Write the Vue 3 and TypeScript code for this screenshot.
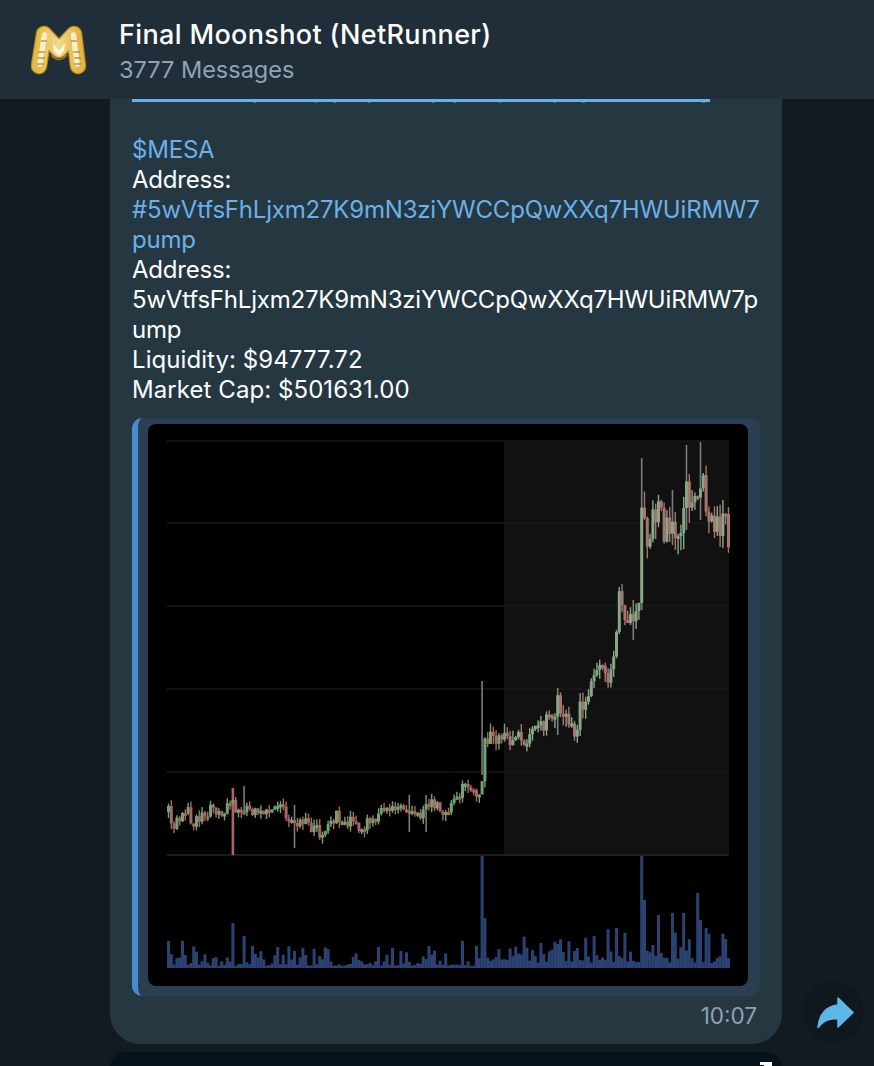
<script setup lang="ts">
interface Candle {
  x: number
  top: number
  bottom: number
  bodyTop: number
  bodyH: number
  color: string
  wickColor: string
  wickWidth: number
}

// traced from the screenshot, page coordinates
const trace: [number, number][] = [
  [167, 812], [172, 825], [180, 820], [185, 808], [190, 822], [197, 820], [205, 812], [212, 808],
  [220, 815], [228, 797], [232, 802], [238, 818], [245, 802], [250, 812], [260, 815], [275, 810],
  [280, 808], [285, 815], [293, 825], [300, 822], [315, 830], [322, 838], [328, 825], [335, 815],
  [345, 820], [355, 825], [365, 825], [375, 815], [385, 805], [395, 810], [405, 810], [410, 815],
  [420, 812], [430, 805], [440, 810], [450, 808], [460, 790], [465, 785], [472, 795], [480, 795],
  [483, 735], [490, 735], [500, 742], [510, 740], [520, 735], [530, 738], [540, 725], [550, 715],
  [556, 702], [560, 720], [565, 715], [572, 725], [575, 735], [580, 702], [585, 695], [590, 680],
  [595, 675], [600, 668], [608, 680], [610, 660], [614, 640], [617, 592], [622, 610], [626, 628],
  [632, 612], [638, 600], [640, 512], [645, 540], [650, 530], [655, 515], [660, 520], [665, 530],
  [670, 525], [675, 535], [680, 520], [685, 495], [690, 510], [695, 500], [698, 470], [702, 490],
  [708, 510], [714, 530], [720, 520], [725, 510], [729, 555],
]

const wickOverrides: Record<number, [number, number]> = {
  232: [788, 855],
  243: [786, 815],
  408: [795, 832],
  424: [795, 832],
  293: [805, 848],
  482: [681, 775],
  556: [688, 735],
  633: [600, 640],
  639: [458, 610],
  685: [445, 530],
  698: [442, 520],
  672: [490, 545],
  729: [540, 567],
}

const volumeSpikes: [number, number][] = [
  [167, 941], [181, 941], [231, 923], [242, 936], [277, 947], [293, 951], [327, 949], [460, 941],
  [481, 856], [484, 918], [540, 943], [555, 944], [576, 948], [593, 936], [616, 928], [640, 856],
  [643, 900], [657, 915], [670, 913], [683, 913], [697, 893], [700, 920], [704, 928], [724, 939],
]

// small bits of descenders showing below the clipped link line
const descenders = [121, 183, 201, 236, 300, 321, 366, 421, 450, 570]

let seed = 41
function rand(): number {
  seed = (seed * 16807) % 2147483647
  return (seed - 1) / 2147483646
}

function priceAt(x: number): number {
  for (let i = 1; i < trace.length; i++) {
    const [x1, y1] = trace[i]
    if (x <= x1) {
      const [x0, y0] = trace[i - 1]
      return y0 + ((y1 - y0) * (x - x0)) / (x1 - x0)
    }
  }
  return trace[trace.length - 1][1]
}

const step = 2.8
const candles: Candle[] = []
const volumes: { x: number; y: number }[] = []
let prev = priceAt(167)
for (let x = 167; x <= 729; x += step) {
  const amp = x < 480 ? 12 : x < 638 ? 20 : 34
  const close = priceAt(x) + (rand() - 0.5) * amp
  const up = close < prev
  const bodyTop = Math.min(prev, close)
  const bodyH = Math.max(Math.abs(close - prev), 3)
  let top = bodyTop - rand() * amp * 0.5
  let bottom = bodyTop + bodyH + rand() * amp * 0.5
  const color = x > 504 ? (up ? '#86a886' : '#a9736e') : up ? '#6fa572' : '#a9655f'
  let wickColor = color
  let wickWidth = 1.4
  const key = Object.keys(wickOverrides).map(Number).find((k) => Math.abs(k - x) < step / 2)
  if (key) {
    ;[top, bottom] = wickOverrides[key]
    wickColor = key === 232 ? '#a9655f' : '#7c7c7c'
    wickWidth = key === 232 ? 2.6 : 1.6
  }
  candles.push({ x, top, bottom, bodyTop, bodyH, color, wickColor, wickWidth })
  prev = close

  const r = rand()
  const r4 = r * r * r * r
  let vy = 968 - (x > 480 ? 5 + r * 12 + r4 * 22 : 2 + r * 5 + r4 * 16)
  const spike = volumeSpikes.find(([sx]) => Math.abs(sx - x) < step / 2)
  if (spike) vy = spike[1]
  volumes.push({ x, y: vy })
}

const gridLines = [441, 523, 606, 689, 772]

const lines = [
  { text: '', link: false },
  { text: '$MESA', link: true },
  { text: 'Address:', link: false },
  { text: '#5wVtfsFhLjxm27K9mN3ziYWCCpQwXXq7HWUiRMW7', link: true },
  { text: 'pump', link: true },
  { text: 'Address:', link: false },
  { text: '5wVtfsFhLjxm27K9mN3ziYWCCpQwXXq7HWUiRMW7p', link: false },
  { text: 'ump', link: false },
  { text: 'Liquidity: $94777.72', link: false, figures: true },
  { text: 'Market Cap: $501631.00', link: false, figures: true },
]
</script>

<template>
  <div class="screen">
    <!-- Header -->
    <header class="top-bar">
      <svg class="avatar" viewBox="0 0 56 54" width="56" height="54">
        <defs>
          <linearGradient id="gold" x1="0" y1="0" x2="1" y2="0">
            <stop offset="0" stop-color="#e6bb4c" />
            <stop offset="0.5" stop-color="#f2d98c" />
            <stop offset="1" stop-color="#e4b546" />
          </linearGradient>
        </defs>
        <path d="M8 43 L13 11 L28 27 L43 11 L47 43" fill="none" stroke="#bd8c1c" stroke-width="16.5" stroke-linecap="round" stroke-linejoin="round" />
        <path d="M8 43 L13 11 L28 27 L43 11 L47 43" fill="none" stroke="url(#gold)" stroke-width="14" stroke-linecap="round" stroke-linejoin="round" />
        <path d="M9 41 L13.5 12 M46 41 L42.5 12" fill="none" stroke="#f9eec4" stroke-width="5.5" stroke-linecap="round" />
        <path d="M7 29h7M7 35h7M6 41h7M42 29h7M43 35h7M43 41h7M10 18h6M40 18h6" stroke="#8f7029" stroke-width="1" />
        <path d="M22 20 L28 28 L34 20 L33 28 L28 33 L23 28 Z" fill="#fff8df" />
        <path d="M20 32 Q28 41 36 32" fill="none" stroke="#a87a18" stroke-width="1.6" />
      </svg>
      <div class="title-block">
        <div class="title">Final Moonshot (NetRunner)</div>
        <div class="subtitle">3777 Messages</div>
      </div>
    </header>

    <!-- Messages -->
    <main class="messages">
      <article class="bubble">
        <div class="clipped-link">
          <span v-for="d in descenders" :key="d" class="descender" :style="{ left: d + 'px' }"></span>
        </div>
        <div
          v-for="(line, i) in lines"
          :key="i"
          class="line"
          :class="{ link: line.link, figures: line.figures }"
        >{{ line.text }}</div>

        <div class="quote">
          <div class="photo">
            <svg viewBox="0 0 600 562" width="600" height="562">
              <g transform="translate(-148 -424)">
                <rect x="504" y="441" width="225" height="414" fill="#111111" />
                <line v-for="y in gridLines" :key="y" x1="167" x2="729" :y1="y" :y2="y" stroke="#191919" stroke-width="1.5" />
                <line x1="167" x2="729" y1="855" y2="855" stroke="#26262a" stroke-width="1.5" />
                <g class="soft">
                  <rect v-for="(v, i) in volumes" :key="'v' + i" :x="v.x" :y="v.y" width="3" :height="968 - v.y" fill="#2b4373" />
                  <g v-for="(c, i) in candles" :key="'c' + i">
                    <rect :x="c.x + 1.5 - c.wickWidth / 2" :y="c.top" :width="c.wickWidth" :height="c.bottom - c.top" :fill="c.wickColor" />
                    <rect :x="c.x" :y="c.bodyTop" width="3" :height="c.bodyH" :fill="c.color" />
                  </g>
                </g>
              </g>
            </svg>
          </div>
        </div>

        <div class="meta">10:07</div>
      </article>

      <div class="next-bubble"><span class="next-mark"></span></div>
    </main>

    <!-- Forward button -->
    <button class="forward">
      <svg viewBox="0 0 62 62" width="62" height="62">
        <path
          d="M36 17 L51 31.5 L36 46 L36 38 C28 37 21 40 16 46.5 C17 34 24 25 36 24 Z"
          fill="#5db8ea"
          stroke="#5db8ea"
          stroke-width="1.5"
          stroke-linejoin="round"
        />
      </svg>
    </button>
  </div>
</template>

<style scoped>
.screen {
  position: relative;
  width: 874px;
  height: 1066px;
  overflow: hidden;
  background: #111b20;
  font-family: Inter, "Liberation Sans", sans-serif;
  color: #fff;
}

.top-bar {
  display: flex;
  align-items: flex-start;
  height: 99px;
  box-sizing: border-box;
  padding: 0 0 0 31px;
  gap: 32px;
  background: #1f2e39;
}

.avatar {
  margin-top: 23px;
  flex-shrink: 0;
}

.title-block {
  padding-top: 18px;
}

.title {
  font-size: 27px;
  line-height: 34px;
  font-weight: 500;
  letter-spacing: 0.35px;
}

.subtitle {
  font-size: 23.5px;
  line-height: 36px;
  color: #8fa3b3;
}

.bubble {
  position: relative;
  width: 672px;
  height: 945px;
  box-sizing: border-box;
  margin-left: 110px;
  padding: 0 22px;
  background: #253741;
  border-radius: 0 0 30px 30px;
}

.clipped-link {
  position: relative;
  width: 578px;
  height: 3px;
  margin-bottom: 3px;
  background: #6ab0e8;
}

.descender {
  position: absolute;
  top: 3px;
  width: 3px;
  height: 1px;
  background: #3f6d92;
}

.line {
  height: 30px;
  font-size: 24px;
  line-height: 30px;
  white-space: nowrap;
  letter-spacing: -0.2px;
}

.line.figures {
  letter-spacing: 0.07px;
}

.line.link {
  color: #6cb0e8;
}

.quote {
  margin-top: 13px;
  padding: 6px 12px 10px 10px;
  background: #2a4052;
  border-left: 6px solid #4a8bd0;
  border-radius: 10px;
}

.photo {
  width: 600px;
  height: 562px;
  background: #000;
  border-radius: 8px;
  overflow: hidden;
}

.photo svg {
  display: block;
}

.soft {
  filter: blur(0.6px);
}

.meta {
  margin-top: 6px;
  padding-right: 3px;
  text-align: right;
  font-size: 22.5px;
  line-height: 28px;
  color: #8ea2af;
}

.next-bubble {
  position: relative;
  width: 672px;
  height: 40px;
  margin: 8px 0 0 110px;
  background: #06131a;
  border-radius: 16px 16px 0 0;
}

.next-mark {
  position: absolute;
  left: 650px;
  top: 10px;
  width: 12px;
  height: 3px;
  background: #fff;
}

.next-mark::after {
  content: "";
  position: absolute;
  right: 0;
  top: 3px;
  width: 8px;
  height: 1px;
  background: #fff;
}

.forward {
  position: absolute;
  left: 802px;
  top: 981px;
  width: 62px;
  height: 62px;
  padding: 0;
  border: none;
  border-radius: 50%;
  background: #0f181d;
}

.forward svg {
  display: block;
}
</style>
